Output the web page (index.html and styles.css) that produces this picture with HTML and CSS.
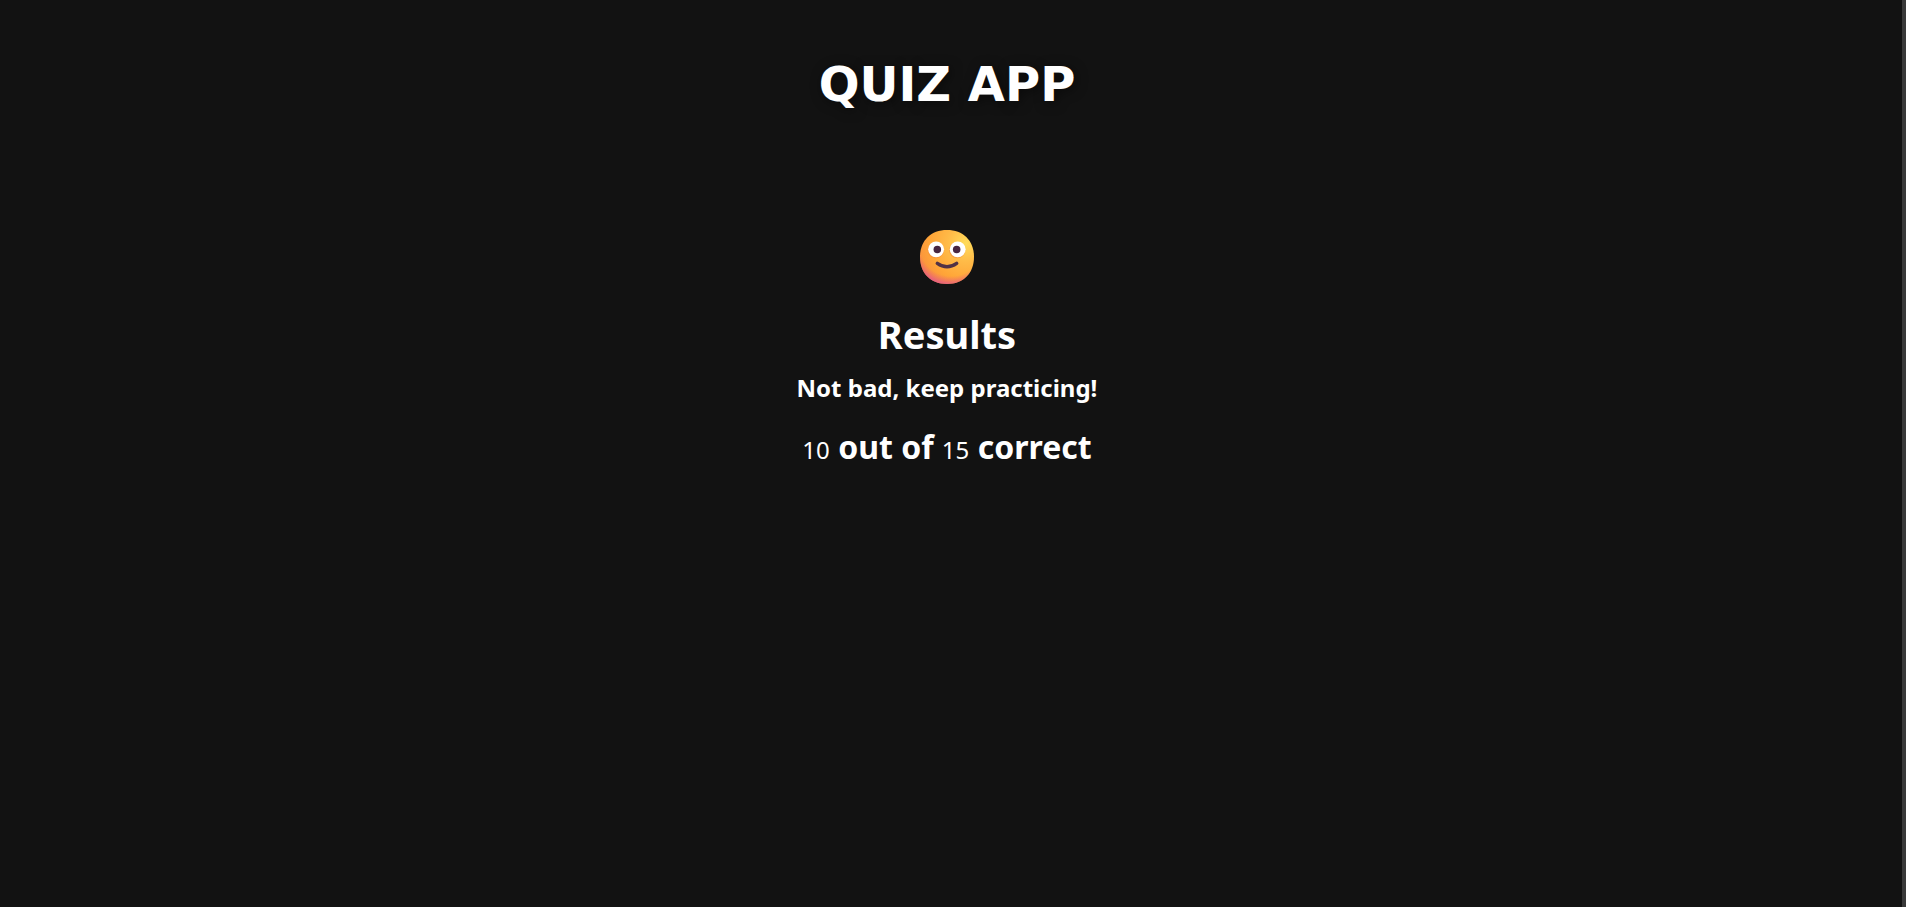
FILE: index.html
```html
<!DOCTYPE html>
<html lang="en">
<head>
<meta charset="utf-8">
<title>Quiz App</title>
<link rel="stylesheet" href="styles.css">
</head>
<body>
<div class="page">
  <header class="header">
    <h1 class="title">QUIZ APP</h1>
  </header>
  <main class="results">
    <svg class="face" viewBox="0 0 53 53" role="img" aria-label="Smiling face">
      <defs>
        <radialGradient id="skin" cx="0.85" cy="0.25" r="0.95">
          <stop offset="0" stop-color="#ffdc5a"/>
          <stop offset="0.35" stop-color="#ffbb48"/>
          <stop offset="0.7" stop-color="#ffa638"/>
          <stop offset="1" stop-color="#f98f3e"/>
        </radialGradient>
        <radialGradient id="chin" cx="0.58" cy="0.26" r="0.76">
          <stop offset="0.78" stop-color="#ec5f78" stop-opacity="0"/>
          <stop offset="1" stop-color="#e2568c" stop-opacity="0.9"/>
        </radialGradient>
      </defs>
      <path d="M26.500 0C42.500 0 53 10.500 53 26.500S42.500 53 26.500 53 0 42.500 0 26.500 10.500 0 26.500 0Z" fill="url(#skin)"/>
      <path d="M26.500 0C42.500 0 53 10.500 53 26.500S42.500 53 26.500 53 0 42.500 0 26.500 10.500 0 26.500 0Z" fill="url(#chin)"/>
      <circle cx="15.500" cy="19.800" r="8" fill="#f0853a" opacity="0.5"/>
      <circle cx="36.500" cy="19.800" r="8" fill="#f0853a" opacity="0.5"/>
      <circle cx="15.800" cy="19" r="7.800" fill="#fff"/>
      <circle cx="37" cy="19" r="7.800" fill="#fff"/>
      <circle cx="17" cy="19.200" r="3.700" fill="#482641"/>
      <circle cx="36" cy="19.200" r="3.700" fill="#482641"/>
      <path d="M17 32.800Q26.500 39.500 36 32.800" fill="none" stroke="#513246" stroke-width="3.400" stroke-linecap="round"/>
    </svg>
    <h2 class="heading">Results</h2>
    <h4 class="message">Not bad, keep practicing!</h4>
    <h3 class="score"><span class="number">10</span> out of <span class="number">15</span> correct</h3>
  </main>
</div>
<div class="scrollbar"></div>
</body>
</html>
```

FILE: styles.css
```css
* {
  box-sizing: border-box;
  margin: 0;
  padding: 0;
}

body {
  display: flex;
  min-height: 100vh;
  background: #121212;
  color: #fff;
  font-family: "Noto Sans", "Open Sans", sans-serif;
}

.page {
  flex: 1;
  display: flex;
  flex-direction: column;
  align-items: center;
  padding: 48px 0;
  margin-right: 8px;
  text-align: center;
}

.title {
  font-family: "DejaVu Sans", sans-serif;
  font-size: 48px;
  line-height: 72px;
  font-weight: 700;
  text-shadow: 2px 2px 12px rgba(0, 0, 0, 0.5);
}

.results {
  display: flex;
  flex-direction: column;
  align-items: center;
  padding-top: 110px;
}

.face {
  display: block;
  width: 54px;
  height: 54px;
}

.heading {
  margin-top: 22px;
  font-size: 38px;
  line-height: 56px;
  font-weight: 700;
}

.message {
  margin-top: 8px;
  font-size: 24px;
  line-height: 36px;
  font-weight: 700;
}

.score {
  margin-top: 20px;
  font-size: 32px;
  line-height: 42px;
  font-weight: 700;
}

.number {
  font-size: 24px;
  font-weight: 400;
}

.scrollbar {
  width: 4px;
  background: #393939;
}
```
